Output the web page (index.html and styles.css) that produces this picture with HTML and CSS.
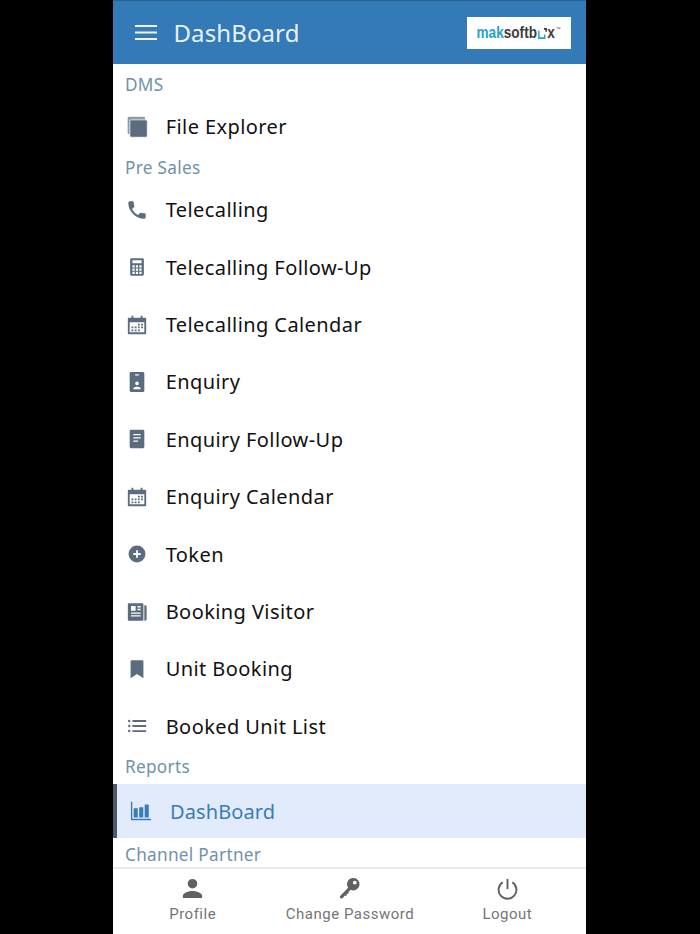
FILE: index.html
```html
<!DOCTYPE html>
<html lang="en">
<head>
<meta charset="utf-8">
<title>DashBoard</title>
<link rel="stylesheet" href="styles.css">
</head>
<body>
<div class="phone">
  <header class="topbar">
    <svg class="burger" viewBox="0 0 22 15"><path d="M0 1h22M0 7.500h22M0 14h22"/></svg>
    <h1 class="title">DashBoard</h1>
    <div class="logo"><div class="logo-text"><span class="mak">mak</span><span class="soft">softb</span><svg class="logo-o" viewBox="0 0 12 12"><path d="M1 3v8h8V7"/><path class="logo-dot" d="M8 1h3v3"/></svg><span class="soft">x</span><sup class="tm">™</sup></div></div>
  </header>
  <nav class="menu">
    <div class="label first">DMS</div>
    <a class="item"><svg class="icon" viewBox="0 0 24 24"><rect class="back" x="1.800" y="0.800" width="19" height="19" rx="1.500"/><rect class="front" x="4.200" y="4.200" width="19" height="19" rx="1.500"/></svg><span>File Explorer</span></a>
    <div class="label">Pre Sales</div>
    <a class="item"><svg class="icon" viewBox="0 0 24 24"><path d="M6.600 10.800c1.400 2.800 3.800 5.100 6.600 6.600l2.200-2.200c.3-.3.700-.4 1-.2 1.100.4 2.300.6 3.600.6.600 0 1.500.4 1.500 1V20c0 .6-.9 1.500-1.500 1.500C10.600 21.500 2.500 13.400 2.500 4c0-.6.900-1.500 1.500-1.500h3.500c.6 0 1 .9 1 1.500 0 1.300.2 2.500.6 3.600.1.300 0 .7-.2 1z"/></svg><span>Telecalling</span></a>
    <a class="item"><svg class="icon" viewBox="0 0 24 24"><path fill-rule="evenodd" d="M6 2.500h12a1.500 1.500 0 0 1 1.500 1.500v16a1.500 1.500 0 0 1-1.500 1.500H6A1.500 1.500 0 0 1 4.500 20V4A1.500 1.500 0 0 1 6 2.500zm1 2v3.500h10V4.500zm0 5.500V12.500h2.500V10zm3.800 0V12.500h2.400V10zm3.700 0V12.500H17V10zM7 13.700V16h2.500v-2.300zm3.800 0V16h2.400v-2.300zm3.700 0V16H17v-2.300zM7 17.200v2.300h2.500v-2.300zm3.800 0v2.300h2.400v-2.300zm3.700 0v2.300H17v-2.300z"/></svg><span>Telecalling Follow-Up</span></a>
    <a class="item"><svg class="icon" viewBox="0 0 24 24"><path fill-rule="evenodd" d="M6 2h2v2h8V2h2v2h3a1 1 0 0 1 1 1v16a1 1 0 0 1-1 1H3a1 1 0 0 1-1-1V5a1 1 0 0 1 1-1h3zM4 9v11h16V9zm9 1.500h2v2h-2zm3.500 0h2v2h-2zM6 13.500h2v2H6zm3.500 0h2v2h-2zm3.500 0h2v2h-2zm3.500 0h2v2h-2zM6 16.800h2v2H6zm3.500 0h2v2h-2zm3.500 0h2v2h-2z"/></svg><span>Telecalling Calendar</span></a>
    <a class="item"><svg class="icon" viewBox="0 0 24 24"><path fill-rule="evenodd" d="M5.500 1h13A1.500 1.500 0 0 1 20 2.500v19a1.500 1.500 0 0 1-1.500 1.500h-13A1.500 1.500 0 0 1 4 21.500v-19A1.500 1.500 0 0 1 5.500 1zM12 11.500a2 2 0 1 0 0 4 2 2 0 0 0 0-4zM8 20h8v-1c0-1.200-2.600-1.800-4-1.800s-4 .6-4 1.800zM10 3.500V5h4V3.500z"/></svg><span>Enquiry</span></a>
    <a class="item"><svg class="icon" viewBox="0 0 24 24"><path fill-rule="evenodd" d="M5.500 2h13A1.500 1.500 0 0 1 20 3.500v17a1.500 1.500 0 0 1-1.500 1.500h-13A1.500 1.500 0 0 1 4 20.500v-17A1.500 1.500 0 0 1 5.500 2zM8 6.500V8h8V6.500zm0 3.500v1.500h8V10zm0 3.500V15h5v-1.500z"/></svg><span>Enquiry Follow-Up</span></a>
    <a class="item"><svg class="icon" viewBox="0 0 24 24"><path fill-rule="evenodd" d="M6 2h2v2h8V2h2v2h3a1 1 0 0 1 1 1v16a1 1 0 0 1-1 1H3a1 1 0 0 1-1-1V5a1 1 0 0 1 1-1h3zM4 9v11h16V9zm9 1.500h2v2h-2zm3.500 0h2v2h-2zM6 13.500h2v2H6zm3.500 0h2v2h-2zm3.500 0h2v2h-2zm3.500 0h2v2h-2zM6 16.800h2v2H6zm3.500 0h2v2h-2zm3.500 0h2v2h-2z"/></svg><span>Enquiry Calendar</span></a>
    <a class="item"><svg class="icon" viewBox="0 0 24 24"><path fill-rule="evenodd" d="M12 2.800a9.200 9.200 0 1 1 0 18.400 9.200 9.200 0 0 1 0-18.400zm-1 5.200v3H8v2h3v3h2v-3h3v-2h-3V8z"/></svg><span>Token</span></a>
    <a class="item"><svg class="icon" viewBox="0 0 24 24"><path fill-rule="evenodd" d="M3 2.500h15a1 1 0 0 1 1 1v17a1 1 0 0 1-1 1H3a1 1 0 0 1-1-1v-17a1 1 0 0 1 1-1zm2.500 3v5h5v-5zm7 0V7H16V5.500zm0 3V10H16V8.500zm-7 4V14H16v-1.500zm0 3V17H16v-1.500zM20 4.500h1a1.500 1.500 0 0 1 1.500 1.500v13.500a2 2 0 0 1-2 2H20z"/></svg><span>Booking Visitor</span></a>
    <a class="item"><svg class="icon" viewBox="0 0 24 24"><path d="M6 2.500h12a1 1 0 0 1 1 1V22l-7-4.500L5 22V3.500a1 1 0 0 1 1-1z"/></svg><span>Unit Booking</span></a>
    <a class="item"><svg class="icon" viewBox="0 0 24 24"><path d="M7 5.500h15v2H7zM7 11h15v2H7zM7 16.500h15v2H7z"/><circle cx="3.500" cy="6.500" r="1.300"/><circle cx="3.500" cy="12" r="1.300"/><circle cx="3.500" cy="17.500" r="1.300"/></svg><span>Booked Unit List</span></a>
    <div class="label reports">Reports</div>
    <a class="item active"><svg class="icon" viewBox="0 0 24 24"><path d="M4 9h4.500v10H4zM10 8h4.500v11H10zM16 5h4.500v14H16zM1 2h1.500v18.500H23V22H1z"/></svg><span>DashBoard</span></a>
    <div class="label channel">Channel Partner</div>
  </nav>
  <footer class="tabs">
    <a class="tab"><svg class="tab-icon" viewBox="0 0 24 24"><path d="M12 12a5 5 0 1 0 0-10 5 5 0 0 0 0 10zm0 2.500c-3.800 0-10 1.700-10 5V22h20v-2.500c0-3.300-6.200-5-10-5z"/></svg><span>Profile</span></a>
    <a class="tab"><svg class="tab-icon" viewBox="0 0 24 24"><path fill-rule="evenodd" d="M16 1a6.500 6.500 0 1 1-2.800 12.400L11 15.500V17.500H9v2H7l-2.500 3H3l-1-1V20l8.600-8.800A6.500 6.500 0 0 1 16 1zm1.500 2.800a2 2 0 1 0 0 4 2 2 0 0 0 0-4z"/></svg><span>Change Password</span></a>
    <a class="tab"><svg class="tab-icon power" viewBox="0 0 24 24"><path d="M12 2v10.500M7 5.500a9.300 9.300 0 1 0 10 0"/></svg><span>Logout</span></a>
  </footer>
</div>
</body>
</html>
```
FILE: styles.css
```css
* { box-sizing: border-box; }
html, body { margin: 0; height: 100%; background: #000; }
.phone {
  width: 473px;
  height: 934px;
  margin-left: 113px;
  background: #fff;
  display: flex;
  flex-direction: column;
  overflow: hidden;
  font-family: "Noto Sans", sans-serif;
}
.topbar {
  height: 64px;
  flex: none;
  background: #337ab7;
  border-top: 1px solid #2a5f8e;
  display: flex;
  align-items: center;
  padding: 0 15px 0 22px;
  color: #e8f1f8;
}
.burger { width: 22px; height: 15px; flex: none; }
.burger path { stroke: #eef4f9; stroke-width: 2; fill: none; }
.title {
  margin: 0 0 0 16.500px;
  font-size: 24px;
  font-weight: 400;
  letter-spacing: .1px;
  flex: 1;
}
.logo {
  width: 104px;
  height: 32px;
  background: #fff;
  display: flex;
  align-items: center;
  justify-content: center;
  overflow: hidden;
}
.logo-text {
  display: flex;
  align-items: center;
  flex: none;
  font-family: "Liberation Sans", sans-serif;
  font-weight: 700;
  font-size: 17px;
  white-space: nowrap;
  transform: scaleX(.8);
}
.mak { color: #2a9fc9; }
.soft { color: #3c3c3c; }
.logo-o { width: 11px; height: 11px; margin: 2px 1px 0; fill: none; stroke: #2a9fc9; stroke-width: 2; }
.logo-dot { stroke: #333; }
.tm { font-size: 6px; font-weight: 400; color: #555; margin: -8px 0 0 1px; }
.menu { flex: 1; min-height: 0; overflow: hidden; }
.label {
  height: 25.600px;
  line-height: 25.600px;
  padding-left: 12px;
  font-size: 17.200px;
  color: #6f92a8;
  letter-spacing: .3px;
}
.first { margin-top: 7.500px; height: 26.600px; }
.reports { height: 29.300px; line-height: 24.600px; }
.channel { margin-top: 4px; }
.item {
  height: 57.400px;
  display: flex;
  align-items: center;
  padding-left: 12.700px;
  font-size: 20px;
  letter-spacing: .42px;
  color: #111;
}
.icon { width: 22px; height: 22px; flex: none; margin-right: 18px; fill: #5b6b80; }
.back { fill: #8f9bab; }
.front { stroke: #fff; stroke-width: .8; }
.active {
  height: 54px;
  padding-left: 17px;
  background: #e2ebfc;
  box-shadow: inset 4px 0 0 #4d5b69;
  color: #3a7db5;
  letter-spacing: .1px;
}
.active .icon { fill: #3a7db5; margin-right: 18px; }
.tabs {
  height: 67px;
  flex: none;
  border-top: 2px solid #eaeaea;
  display: flex;
  padding: 8px 0 0 1px;
  background: #fff;
}
.tab {
  flex: 1;
  display: flex;
  flex-direction: column;
  align-items: center;
  font-family: Roboto, sans-serif;
  font-size: 15px;
  letter-spacing: .5px;
  color: #757575;
}
.tab span { margin-top: 4px; line-height: 20px; }
.tab-icon { width: 23px; height: 23px; fill: #616161; }
.power { fill: none; stroke: #616161; stroke-width: 2; }
```
